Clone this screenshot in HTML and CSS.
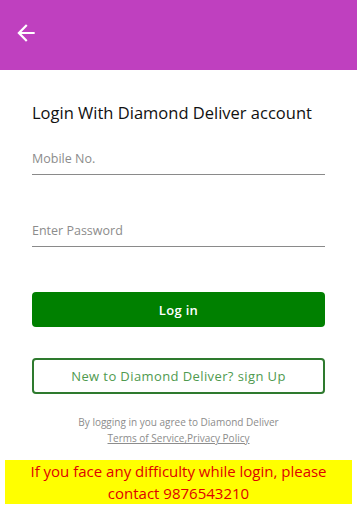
FILE: index.html
```html
<!DOCTYPE html>
<html lang="en">
<head>
    <meta charset="UTF-8">
    <meta name="viewport" content="width=device-width, initial-scale=1.0">
    <link rel="stylesheet" href="styles.css">
</head>
<body>
    <header class="header">
        <div class="back-btn">
            <svg width="26" height="26" viewBox="0 0 24 24">
                <path d="M20 11H7.83l5.59-5.59L12 4l-8 8 8 8 1.41-1.41L7.83 13H20v-2z" fill="#fff"/>
            </svg>
        </div>
    </header>

    <section class="login">
        <h1 class="title">Login With Diamond Deliver account</h1>

        <div class="field">
            <input type="text" placeholder="Mobile No.">
        </div>
        <div class="field">
            <input type="password" placeholder="Enter Password">
        </div>

        <button class="login-btn">Log in</button>
        <button class="signup-btn">New to Diamond Deliver? sign Up</button>

        <p class="terms">
            By logging in you agree to Diamond Deliver<br>
            <a href="#">Terms of Service,Privacy Policy</a>
        </p>
    </section>

    <div class="notice">If you face any difficulty while login, please contact 9876543210</div>
</body>
</html>
```

FILE: styles.css
```css
* {
    margin: 0;
    padding: 0;
    box-sizing: border-box;
    font-family: "Open Sans", Arial, sans-serif;
}

:root {
    --purple: #bf40bf;
    --green: #008000;
}

body {
    background: #fff;
    width: 357px;
}

.header {
    height: 70px;
    background-color: var(--purple);
    display: flex;
    align-items: center;
    padding-left: 13px;
}

.back-btn {
    display: flex;
    margin-top: -4px;
}

.login {
    display: flex;
    flex-direction: column;
    padding: 31px 32px 0;
}

.title {
    font-size: 16.5px;
    font-weight: 400;
    color: #111;
    margin-bottom: 18px;
}

.field {
    border-bottom: 1px solid #8a8a8a;
    margin-bottom: 39px;
}

.field input {
    width: 100%;
    border: none;
    outline: none;
    font-size: 12.5px;
    padding: 8px 0 7px;
    color: #333;
    background: transparent;
}

.field input::placeholder {
    color: #8c8c8c;
}

.login-btn {
    height: 35px;
    margin-top: 6px;
    background-color: var(--green);
    color: #fff;
    border: none;
    border-radius: 4px;
    font-size: 13px;
    font-weight: 600;
    letter-spacing: 0.3px;
    cursor: pointer;
}

.signup-btn {
    height: 36px;
    margin-top: 31px;
    background: #fff;
    color: #4f9a4f;
    border: 2px solid #2e7a2e;
    border-radius: 4px;
    font-size: 13px;
    letter-spacing: 0.4px;
    cursor: pointer;
}

.terms {
    margin-top: 20px;
    text-align: center;
    font-size: 10px;
    line-height: 16px;
    color: #8c8c8c;
}

.terms a {
    color: #8c8c8c;
}

.notice {
    margin: 14px 5px 0;
    background: #ffff00;
    color: #e00000;
    text-align: center;
    font-size: 15px;
    font-weight: 500;
    line-height: 22px;
    padding: 0 16px;
}
```
